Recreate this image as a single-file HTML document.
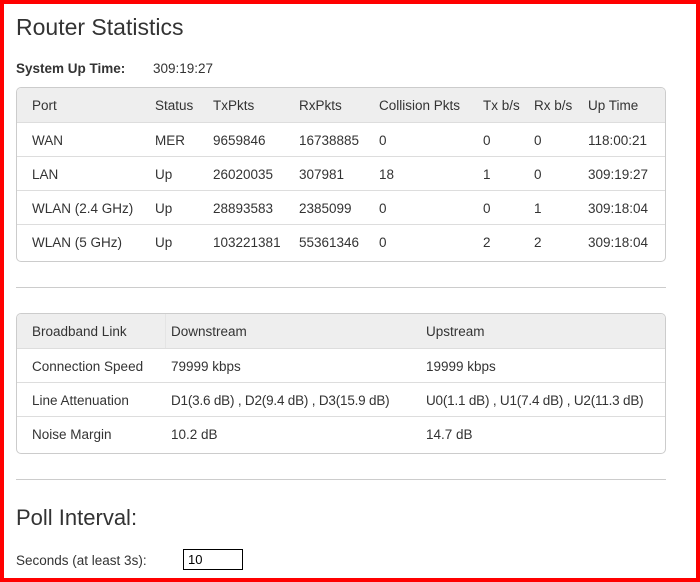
<!DOCTYPE html><html><head><style>
*{margin:0;padding:0;box-sizing:border-box}
body{width:700px;height:582px;border:4px solid #f00;background:#fff;font-family:"Liberation Sans",sans-serif;color:#333;font-size:13.5px;position:relative;overflow:hidden}
.a{position:absolute;white-space:nowrap}
h1{position:absolute;left:12px;top:10px;font-size:23px;font-weight:normal;color:#333}
.tb{position:absolute;left:12px;width:650px;border:1px solid #ccc;border-radius:5px;overflow:hidden}
.row{position:relative;height:34px;border-top:1px solid #ddd}
.row:first-child{border-top:none;background:#eee}
.row span{position:absolute;top:10px;white-space:nowrap}
.hr{position:absolute;left:12px;width:650px;border-top:1px solid #ccc}
</style></head><body>
<h1>Router Statistics</h1>
<div class="a" style="left:12px;top:57px;font-weight:bold">System Up Time:</div>
<div class="a" style="left:149px;top:57px">309:19:27</div>
<div class="tb" style="top:83px;height:175px">
<div class="row"><span style="left:15px">Port</span><span style="left:138px">Status</span><span style="left:196px">TxPkts</span><span style="left:282px">RxPkts</span><span style="left:362px">Collision Pkts</span><span style="left:466px">Tx b/s</span><span style="left:517px">Rx b/s</span><span style="left:571px">Up Time</span></div>
<div class="row"><span style="left:15px">WAN</span><span style="left:138px">MER</span><span style="left:196px">9659846</span><span style="left:282px">16738885</span><span style="left:362px">0</span><span style="left:466px">0</span><span style="left:517px">0</span><span style="left:571px">118:00:21</span></div>
<div class="row"><span style="left:15px">LAN</span><span style="left:138px">Up</span><span style="left:196px">26020035</span><span style="left:282px">307981</span><span style="left:362px">18</span><span style="left:466px">1</span><span style="left:517px">0</span><span style="left:571px">309:19:27</span></div>
<div class="row"><span style="left:15px">WLAN (2.4 GHz)</span><span style="left:138px">Up</span><span style="left:196px">28893583</span><span style="left:282px">2385099</span><span style="left:362px">0</span><span style="left:466px">0</span><span style="left:517px">1</span><span style="left:571px">309:18:04</span></div>
<div class="row"><span style="left:15px">WLAN (5 GHz)</span><span style="left:138px">Up</span><span style="left:196px">103221381</span><span style="left:282px">55361346</span><span style="left:362px">0</span><span style="left:466px">2</span><span style="left:517px">2</span><span style="left:571px">309:18:04</span></div>
</div>
<div class="hr" style="top:283px"></div>
<div class="tb" style="top:309px;height:141px">
<div class="row"><span style="left:15px">Broadband Link</span><span style="left:154px">Downstream</span><span style="left:409px">Upstream</span><div style="position:absolute;left:148px;top:0;height:34px;border-left:1px solid #e4e4e4"></div></div>
<div class="row"><span style="left:15px">Connection Speed</span><span style="left:154px">79999 kbps</span><span style="left:409px">19999 kbps</span></div>
<div class="row"><span style="left:15px">Line Attenuation</span><span style="left:154px;letter-spacing:-0.2px">D1(3.6 dB) , D2(9.4 dB) , D3(15.9 dB)</span><span style="left:409px;letter-spacing:-0.2px">U0(1.1 dB) , U1(7.4 dB) , U2(11.3 dB)</span></div>
<div class="row"><span style="left:15px">Noise Margin</span><span style="left:154px">10.2 dB</span><span style="left:409px">14.7 dB</span></div>
</div>
<div class="hr" style="top:475px"></div>
<div class="a" style="left:12px;top:501px;font-size:22px">Poll Interval:</div>
<div class="a" style="left:12px;top:549px">Seconds (at least 3s):</div>
<div class="a" style="left:179px;top:545px;width:60px;height:21px;border:1px solid #000;font-size:13px;padding:2px 4px;color:#000">10</div>
</body></html>
